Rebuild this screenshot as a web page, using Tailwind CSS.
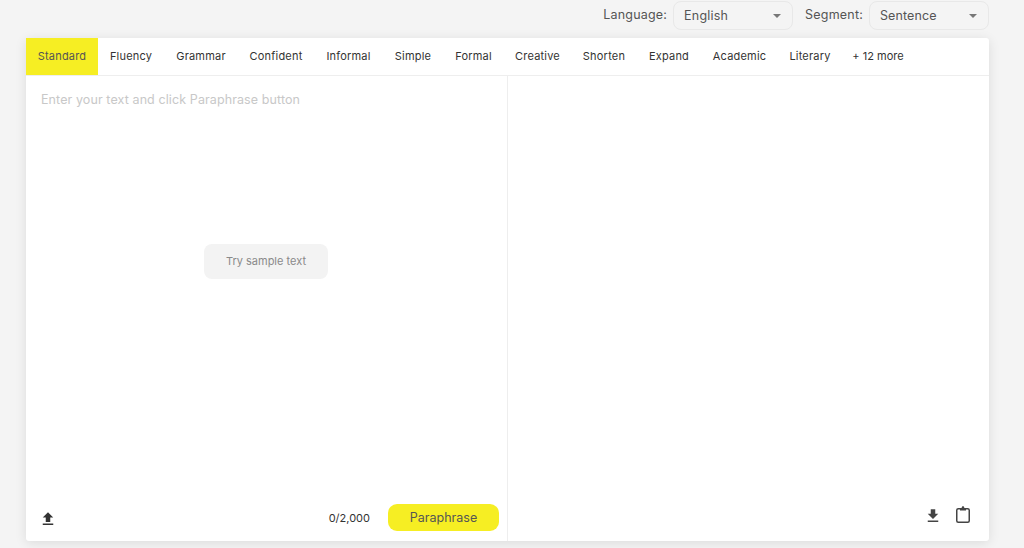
<!DOCTYPE html>
<html lang="en">
  <head>
    <meta charset="UTF-8" />
    <title>Paraphraser</title>
    <script src="https://cdn.jsdelivr.net/npm/@tailwindcss/browser@4"></script>
  </head>
  <body class="h-[548px] w-[1024px] overflow-hidden bg-[#f4f4f4] font-['Inter',sans-serif]">
    <!-- top selects -->
    <div class="flex h-[38px] items-start justify-end pt-px pr-[35px] text-[12.5px] text-[#555]">
      <div class="flex items-center">
        <span class="mr-[6px] tracking-[0.2px]">Language:</span>
        <div class="flex h-[29px] w-[120px] items-center justify-between rounded-lg border border-[#e8e8e8] pr-[11px] pl-[10px]">
          <span class="mt-[2px] tracking-[0.2px]">English</span>
          <span class="h-0 w-0 border-x-4 border-t-4 border-x-transparent border-t-[#777]"></span>
        </div>
      </div>
      <div class="ml-[12px] flex items-center">
        <span class="mr-[6px] tracking-[0.2px]">Segment:</span>
        <div class="flex h-[29px] w-[120px] items-center justify-between rounded-lg border border-[#e8e8e8] pr-[11px] pl-[10px]">
          <span class="mt-[2px] tracking-[0.1px]">Sentence</span>
          <span class="h-0 w-0 border-x-4 border-t-4 border-x-transparent border-t-[#777]"></span>
        </div>
      </div>
    </div>

    <!-- main card -->
    <div class="ml-[26px] flex h-[503px] w-[963px] flex-col rounded-[3px] bg-white shadow-[0_2px_12px_rgba(0,0,0,0.1)]">
      <div class="flex h-[38px] shrink-0 items-center border-b border-[#eeeeee] text-[11px] tracking-[0.2px] text-[#333]">
        <div class="flex h-full w-[72px] items-center justify-center bg-[#f6ee23] text-[#555]">Standard</div>
        <div class="flex h-full w-[66px] items-center justify-center">Fluency</div>
        <div class="flex h-full w-[74px] items-center justify-center">Grammar</div>
        <div class="flex h-full w-[76px] items-center justify-center">Confident</div>
        <div class="flex h-full w-[69px] items-center justify-center">Informal</div>
        <div class="flex h-full w-[60px] items-center justify-center">Simple</div>
        <div class="flex h-full w-[61px] items-center justify-center">Formal</div>
        <div class="flex h-full w-[67px] items-center justify-center">Creative</div>
        <div class="flex h-full w-[66px] items-center justify-center">Shorten</div>
        <div class="flex h-full w-[64px] items-center justify-center">Expand</div>
        <div class="flex h-full w-[77px] items-center justify-center">Academic</div>
        <div class="flex h-full w-[64px] items-center justify-center">Literary</div>
        <div class="flex h-full w-[72px] items-center justify-center tracking-normal">+ 12 more</div>
      </div>

      <div class="flex min-h-0 flex-1">
        <!-- input pane -->
        <div class="flex w-[482px] flex-col border-r border-[#eeeeee]">
          <div class="px-[15px] pt-[15px] text-[12.5px] leading-[18px] tracking-[0.1px] text-[#c8c8c8]">Enter your text and click Paraphrase button</div>
          <div class="flex flex-1 items-center justify-center pr-px pb-[90px]">
            <div class="flex h-[35px] w-[124px] items-center justify-center rounded-lg bg-[#f3f3f3] pt-px text-[11px] text-[#8a8a8a]">Try sample text</div>
          </div>
          <div class="flex h-[38px] items-center pr-[8px] pb-[9px] pl-[13px]">
            <svg class="mt-[3px] h-[18px] w-[18px] text-[#333]" viewBox="0 0 24 24" fill="currentColor"><path d="M9 16h6v-6h4l-7-7-7 7h4zm-4 2h14v2H5z"/></svg>
            <span class="mt-[2px] mr-[18px] ml-auto text-[11px] text-[#333]">0/2,000</span>
            <button class="flex h-[27px] w-[111px] items-center justify-center rounded-[9px] bg-[#f6ee23] pt-[2px] text-[12.5px] text-[#555]">Paraphrase</button>
          </div>
        </div>
        <!-- output pane -->
        <div class="flex flex-1 flex-col justify-end">
          <div class="flex h-[42px] items-start justify-end gap-[14px] pt-[7px] pr-[19px] text-[#444]">
            <svg class="mt-px h-[18px] w-[18px]" viewBox="0 0 24 24" fill="currentColor"><path d="M19 9h-4V3H9v6H5l7 7 7-7zM5 18v2h14v-2H5z"/></svg>
            <svg class="h-[17px] w-[14px]" viewBox="0 0 14 17" fill="none"><rect x="0.75" y="2.75" width="12.5" height="13.5" rx="1.5" stroke="currentColor" stroke-width="1.5"/><path d="M4 2h1.6C5.8 1 6.3 0 7 0s1.200 1 1.400 2H10v2.500H4z" fill="currentColor"/></svg>
          </div>
        </div>
      </div>
    </div>
  </body>
</html>
